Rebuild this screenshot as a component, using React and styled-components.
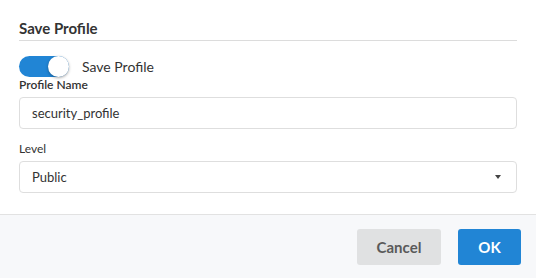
import React, { useState } from 'react';
import styled, { createGlobalStyle } from 'styled-components';

const GlobalStyle = createGlobalStyle`
  html, body {
    margin: 0;
    padding: 0;
    background: #ffffff;
    font-family: Lato, "Open Sans", sans-serif;
    color: #333;
  }
  * { box-sizing: border-box; }
`;

const Dialog = styled.div`
  width: 536px;
  height: 278px;
  display: flex;
  flex-direction: column;
  background: #fff;
`;

const Body = styled.div`
  flex: 1;
  padding: 18px 19px 0 19px;
`;

const Title = styled.div`
  font-size: 15px;
  font-weight: 700;
  color: #333;
  line-height: 20px;
  padding-bottom: 2px;
  border-bottom: 1px solid #dcdcdc;
`;

const ToggleRow = styled.label`
  display: flex;
  align-items: center;
  gap: 13px;
  margin-top: 14px;
  height: 22px;
  font-size: 14px;
  color: #333;
  cursor: pointer;
`;

const Track = styled.span`
  position: relative;
  width: 50px;
  height: 21px;
  border-radius: 11px;
  background: ${(p) => (p.$on ? '#2185d5' : '#c8c8c8')};
  flex-shrink: 0;
`;

const Knob = styled.span`
  position: absolute;
  top: 0;
  left: ${(p) => (p.$on ? '29px' : '0')};
  width: 21px;
  height: 21px;
  border-radius: 50%;
  background: #fff;
  box-shadow: 0 1px 3px rgba(0, 0, 0, 0.35);
`;

const Field = styled.div`
  display: flex;
  flex-direction: column;
  margin-top: ${(p) => p.$top || '0'};
`;

const Label = styled.div`
  font-size: 12px;
  font-weight: ${(p) => (p.$bold ? 600 : 400)};
  color: #333;
  line-height: 15px;
  margin-bottom: 5px;
`;

const Box = styled.div`
  height: 32px;
  border: 1px solid #dedede;
  border-radius: 4px;
  display: flex;
  align-items: center;
  justify-content: space-between;
  padding: 0 13px 0 12px;
  font-size: 13px;
  color: #333;
`;

const Caret = styled.span`
  width: 0;
  height: 0;
  border-left: 3.5px solid transparent;
  border-right: 3.5px solid transparent;
  border-top: 4px solid #444;
  margin-right: 2px;
`;

const Footer = styled.div`
  height: 64px;
  background: #f7f8fa;
  border-top: 1px solid #e2e2e2;
  display: flex;
  align-items: center;
  justify-content: flex-end;
  gap: 17px;
  padding: 0 15px 0 0;
`;

const Button = styled.button`
  height: 36px;
  border: none;
  border-radius: 3px;
  font-family: Lato, sans-serif;
  font-size: 15px;
  font-weight: 700;
  padding: 0;
  width: ${(p) => (p.$primary ? '63px' : '84px')};
  background: ${(p) => (p.$primary ? '#2185d5' : '#e0e1e2')};
  color: ${(p) => (p.$primary ? '#fff' : '#5a5a5a')};
  cursor: pointer;
`;

export default function App() {
  const [on, setOn] = useState(true);
  return (
    <>
      <GlobalStyle />
      <Dialog>
        <Body>
          <Title>Save Profile</Title>
          <ToggleRow onClick={() => setOn(!on)}>
            <Track $on={on}>
              <Knob $on={on} />
            </Track>
            Save Profile
          </ToggleRow>
          <Field>
            <Label $bold>Profile Name</Label>
            <Box>security_profile</Box>
          </Field>
          <Field $top="12px">
            <Label>Level</Label>
            <Box>
              Public
              <Caret />
            </Box>
          </Field>
        </Body>
        <Footer>
          <Button>Cancel</Button>
          <Button $primary>OK</Button>
        </Footer>
      </Dialog>
    </>
  );
}
